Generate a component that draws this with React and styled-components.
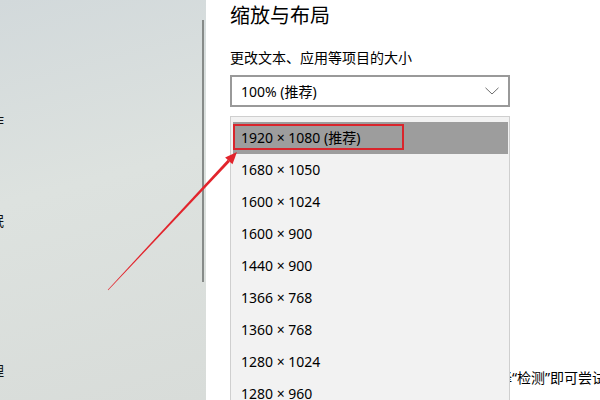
import React from "react";
import styled, { createGlobalStyle } from "styled-components";

const FONT = `"Noto Sans", "Noto Sans CJK SC", sans-serif`;

const Global = createGlobalStyle`
  html, body { margin: 0; padding: 0; background: #fff; }
  body { font-family: ${FONT}; }
  #root { width: 600px; height: 400px; overflow: hidden; }
`;

const Frame = styled.div`
  position: relative;
  width: 600px;
  height: 400px;
  display: flex;
  overflow: hidden;
  font-family: ${FONT};
`;

const Sidebar = styled.aside`
  width: 206px;
  flex: none;
  display: flex;
  justify-content: space-between;
  background: linear-gradient(165deg, #d2d9db 0%, #dde2df 45%, #d8dcd9 100%);
  overflow: hidden;
`;

const Nav = styled.nav`
  display: flex;
  flex-direction: column;
  margin-left: -66px;
  margin-top: -5px;
`;

const NavItem = styled.div`
  height: 50px;
  display: flex;
  align-items: center;
  font-size: 14px;
  color: #111;
  white-space: nowrap;
`;

const ScrollThumb = styled.div`
  width: 2px;
  height: 262px;
  margin-top: 20px;
  margin-right: 2px;
  background: #878b89;
`;

const Main = styled.main`
  flex: 1;
  background: #fff;
  padding: 2px 0 0 24px;
  display: flex;
  flex-direction: column;
  align-items: flex-start;
`;

const Title = styled.h1`
  margin: 0;
  font-size: 20px;
  line-height: 28px;
  font-weight: 400;
  color: #000;
`;

const Label = styled.div`
  margin-top: 18px;
  font-size: 14px;
  line-height: 20px;
  color: #000;
`;

const SelectWrap = styled.div`
  position: relative;
  margin-top: 7px;
  width: 280px;
`;

const SelectBox = styled.div`
  box-sizing: border-box;
  height: 32px;
  border: 2px solid #999;
  display: flex;
  align-items: center;
  justify-content: space-between;
  padding: 0 9px 0 9px;
  font-size: 14px;
  color: #000;
`;

const Menu = styled.div`
  position: absolute;
  top: calc(100% + 9px);
  left: 0;
  width: 280px;
  box-sizing: border-box;
  border: 1px solid #cfcfcf;
  background: #f2f2f2;
  padding: 5px 1px 0 2px;
  z-index: 2;
`;

const Option = styled.div`
  position: relative;
  height: 32px;
  display: flex;
  align-items: center;
  padding-left: 8px;
  padding-bottom: 2px;
  box-sizing: border-box;
  font-size: 14px;
  color: #000;
  background: ${(p) => (p.$active ? "#9d9d9d" : "transparent")};
`;

const Highlight = styled.span`
  position: absolute;
  left: 0;
  top: 2px;
  width: 171px;
  height: 26px;
  box-sizing: border-box;
  border: 2px solid #d9252c;
`;

const Hint = styled.p`
  margin: 261px 0 0 16px;
  font-size: 14px;
  line-height: 20px;
  color: #000;
  white-space: nowrap;
`;

const Annotation = styled.svg`
  position: absolute;
  left: 0;
  top: 0;
  pointer-events: none;
  z-index: 5;
`;

const Chevron = () => (
  <svg width="14" height="8" viewBox="0 0 14 8">
    <polyline points="0.5,0.8 7,7 13.5,0.8" fill="none" stroke="#6e6e6e" strokeWidth="1" />
  </svg>
);

const navItems = ["显示", "声音", "通知和操作", "专注助手", "电源和睡眠", "存储", "平板模式", "多任务处理"];
const options = [
  "1920 × 1080 (推荐)",
  "1680 × 1050",
  "1600 × 1024",
  "1600 × 900",
  "1440 × 900",
  "1366 × 768",
  "1360 × 768",
  "1280 × 1024",
  "1280 × 960",
];

export default function App() {
  return (
    <>
      <Global />
      <Frame>
        <Sidebar>
          <Nav>
            {navItems.map((n) => (
              <NavItem key={n}>{n}</NavItem>
            ))}
          </Nav>
          <ScrollThumb />
        </Sidebar>
        <Main>
          <Title>缩放与布局</Title>
          <Label>更改文本、应用等项目的大小</Label>
          <SelectWrap>
            <SelectBox>
              <span>100% (推荐)</span>
              <Chevron />
            </SelectBox>
            <Menu>
              {options.map((o, i) => (
                <Option key={o} $active={i === 0}>
                  {i === 0 && <Highlight />}
                  {o}
                </Option>
              ))}
            </Menu>
          </SelectWrap>
          <Hint>较旧的显示器可能不会始终自动连接，选择“检测”即可尝试连接。</Hint>
        </Main>
        <Annotation width="600" height="400" viewBox="0 0 600 400">
          <polygon
            points="108.2,290.3 229.9,161.8 227.7,159.8 107.8,289.7"
            fill="#e2242c"
          />
          <polygon points="237,152 232.5,164.2 225.1,157.4" fill="#e2242c" />
        </Annotation>
      </Frame>
    </>
  );
}
